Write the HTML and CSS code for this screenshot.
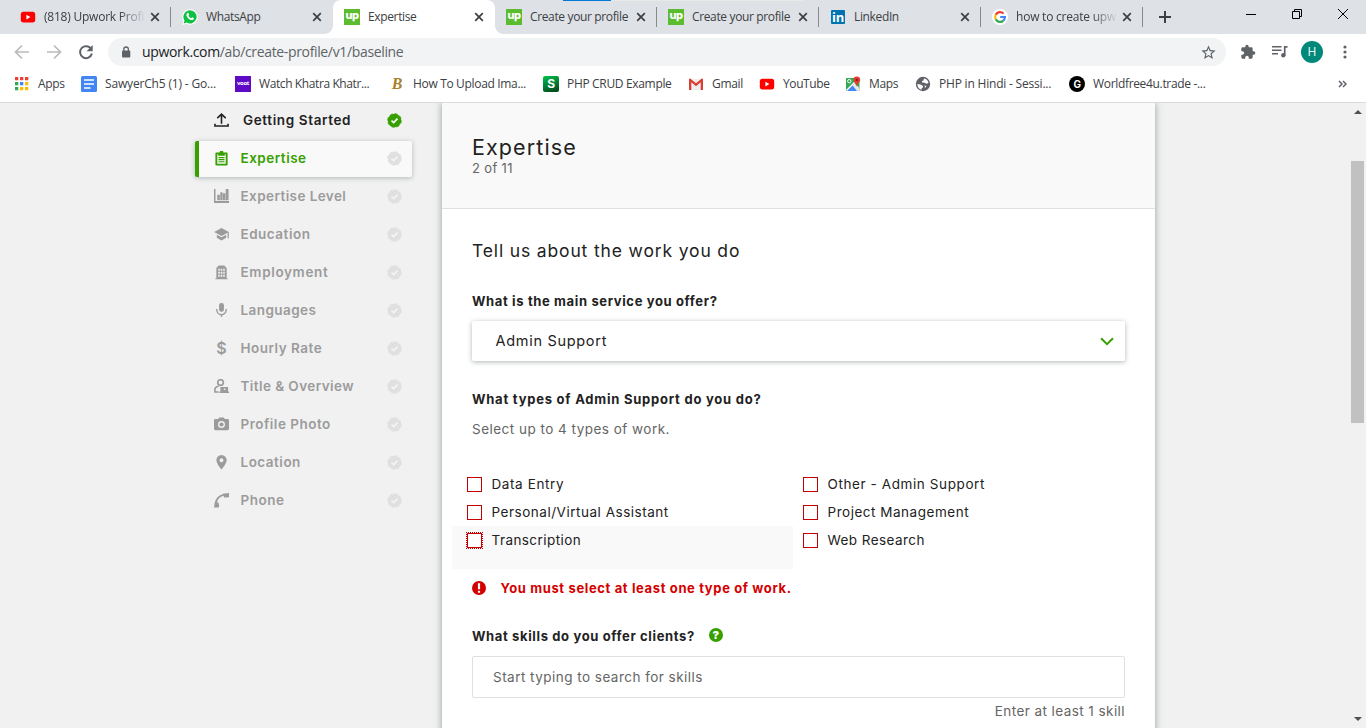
FILE: index.html
```html
<!DOCTYPE html>
<html lang="en">
<head>
<meta charset="utf-8">
<title>Expertise</title>
<link rel="stylesheet" href="styles.css">
</head>
<body>
<svg class="defs" width="0" height="0">
  <defs>
    <symbol id="x" viewBox="0 0 10 10"><path d="M1.2 1.2l7.6 7.6M8.8 1.2L1.2 8.8" stroke="#3c4043" stroke-width="1.7" fill="none"/></symbol>
    <symbol id="yt" viewBox="0 0 16 16"><rect x=".8" y="2.8" width="14.4" height="10.6" rx="2.6" fill="#f00"/><path d="M6.4 5.8v4.6l4-2.3z" fill="#fff"/></symbol>
    <symbol id="seal" viewBox="0 0 14 14"><circle cx="7" cy="7" r="6.3" stroke="none"/><circle cx="7" cy="7" r="6.4" fill="none" stroke="currentColor" stroke-width=".8" stroke-dasharray="3 2.03"/><path d="M4.2 7.2l2 1.800 3.600-3.700" fill="none" stroke-width="1.5"/></symbol>
  </defs>
</svg>

<header class="browser">
  <div class="tabs">
    <div class="top-progress"></div>
    <div class="tab sep"><svg class="fav"><use href="#yt"/></svg><span class="tab-title t-yt fade">(818) Upwork Profi</span><svg class="tab-close"><use href="#x"/></svg></div>
    <div class="tab"><svg class="fav" viewBox="0 0 16 16"><path d="M8 .2a7.7 7.7 0 0 1 0 15.5 8 8 0 0 1-3.6-.9L.2 16l1.200-4.100A7.700 7.700 0 0 1 8 .2z" fill="#fff"/><path d="M8 1.300a6.600 6.600 0 1 1-3.300 12.300l-3 .8.8-2.900A6.600 6.600 0 0 1 8 1.300z" fill="#0fc143"/><path d="M5.300 4.200c.5-.5 1-.4 1.200.1l.6 1.300c.1.400-.5.900-.6 1.200.5 1.100 1.400 1.900 2.500 2.400.4 0 .8-.9 1.200-.9l1.400.7c.5.300.2 1.100-.1 1.500-1 1-2.700.6-3.800-.1C6.200 9.500 5.200 8.400 4.600 7c-.5-1.100-.1-2.200.7-2.800z" fill="#fff"/></svg><span class="tab-title t-wa">WhatsApp</span><svg class="tab-close"><use href="#x"/></svg></div>
    <div class="tab active"><span class="fav up">up</span><span class="tab-title t-ex">Expertise</span><svg class="tab-close"><use href="#x"/></svg></div>
    <div class="tab sep"><span class="fav up">up</span><span class="tab-title t-cr">Create your profile</span><svg class="tab-close"><use href="#x"/></svg></div>
    <div class="tab sep"><span class="fav up">up</span><span class="tab-title t-cr">Create your profile</span><svg class="tab-close"><use href="#x"/></svg></div>
    <div class="tab sep"><span class="fav li">in</span><span class="tab-title t-li">LinkedIn</span><svg class="tab-close"><use href="#x"/></svg></div>
    <div class="tab sep"><svg class="fav" viewBox="0 0 16 16"><circle cx="8" cy="8" r="8" fill="#fff"/><g fill="none" stroke-width="2.200"><path d="M3.700 5.700A4.900 4.900 0 0 1 11.600 4.600" stroke="#ea4335"/><path d="M3.700 10.300a4.900 4.900 0 0 1 0-4.600" stroke="#fbbc05"/><path d="M11.400 11.600a4.900 4.900 0 0 1-7.700-1.300" stroke="#34a853"/><path d="M8.200 8h4.700a4.900 4.900 0 0 1-1.500 3.600" stroke="#4285f4"/></g></svg><span class="tab-title t-go fade">how to create upw</span><svg class="tab-close"><use href="#x"/></svg></div>
    <svg class="new-tab" viewBox="0 0 14 14"><path d="M7 1v12M1 7h12" stroke="#3c4043" stroke-width="2"/></svg>
    <div class="win">
      <svg viewBox="0 0 12 12"><path d="M1 6.500h10" stroke="#000"/></svg>
      <svg viewBox="0 0 12 12"><path d="M1.500 3.500h7v7h-7zM3.500 3.500v-2h7v7h-2" stroke="#000" fill="none"/></svg>
      <svg viewBox="0 0 12 12"><path d="M1 1l10 10M11 1L1 11" stroke="#000" fill="none"/></svg>
    </div>
  </div>

  <div class="toolbar">
    <svg class="nav-btn" viewBox="0 0 16 16"><path d="M15 8H2M8 1.500L1.500 8 8 14.500" fill="none" stroke="#bababc" stroke-width="1.700"/></svg>
    <svg class="nav-btn" viewBox="0 0 16 16"><path d="M1 8h13M8 1.500L14.500 8 8 14.500" fill="none" stroke="#bababc" stroke-width="1.700"/></svg>
    <svg class="nav-btn" viewBox="0 0 16 16"><path d="M13.300 5.200A6 6 0 1 0 13.900 9.600" fill="none" stroke="#5f6368" stroke-width="2"/><path d="M14.700 1v6.200H8.500z" fill="#5f6368"/></svg>
    <div class="omnibox">
      <svg class="lock" viewBox="0 0 10 12"><rect x="1" y="4.500" width="8.300" height="7" rx="1" fill="#5f6368"/><path d="M2.800 5V3.300a2.300 2.300 0 0 1 4.600 0V5" fill="none" stroke="#5f6368" stroke-width="1.300"/></svg>
      <span class="url"><b>upwork.com</b>/ab/create-profile/v1/baseline</span>
      <svg class="star" viewBox="0 0 24 24"><path d="M22 9.240l-7.190-.62L12 2 9.190 8.630 2 9.240l5.460 4.730L5.820 21 12 17.270 18.180 21l-1.630-7.030L22 9.240zM12 15.400l-3.760 2.270 1-4.280-3.320-2.880 4.380-.38L12 6.100l1.710 4.040 4.380.38-3.320 2.880 1 4.280L12 15.400z" fill="#5f6368"/></svg>
    </div>
    <div class="tools">
      <svg class="puzzle" viewBox="0 0 24 24"><path d="M20.500 11H19V7c0-1.100-.9-2-2-2h-4V3.500a2.500 2.500 0 0 0-5 0V5H4c-1.100 0-2 .9-2 2v3.800h1.500a2.700 2.700 0 0 1 0 5.400H2V20c0 1.100.9 2 2 2h3.800v-1.500a2.700 2.700 0 0 1 5.400 0V22H17c1.100 0 2-.9 2-2v-4h1.500a2.500 2.500 0 0 0 0-5z" fill="#5f6368"/></svg>
      <svg class="queue" viewBox="0 0 16 14"><path d="M0 1.800h9.500M0 5.300h9.500M0 8.800h6" stroke="#5f6368" stroke-width="1.500"/><path d="M15.500 1.800h-2.800v8.500" fill="none" stroke="#5f6368" stroke-width="1.700"/><circle cx="11.300" cy="10.300" r="2.200" fill="#5f6368"/></svg>
      <span class="avatar">H</span>
      <svg class="dots" viewBox="0 0 4 14"><g fill="#5f6368"><circle cx="2" cy="2" r="1.600"/><circle cx="2" cy="7" r="1.600"/><circle cx="2" cy="12" r="1.600"/></g></svg>
    </div>
  </div>

  <nav class="bookmarks">
    <a class="bm b1"><svg viewBox="0 0 16 16"><g fill="#ea4335"><path d="M1 1h3.300v3.300H1zM6 1h3.300v3.300H6zM11 1h3.300v3.300H11z"/></g><path d="M1 6h3.300v3.300H1z" fill="#34a853"/><path d="M6 6h3.300v3.300H6z" fill="#4285f4"/><path d="M11 6h3.300v3.300H11z" fill="#fbbc05"/><path d="M1 11h3.300v3.300H1z" fill="#34a853"/><path d="M6 11h3.300v3.300H6zM11 11h3.300v3.300H11z" fill="#fbbc05"/></svg><span>Apps</span></a>
    <a class="bm b2"><svg viewBox="0 0 16 16"><rect width="16" height="16" rx="1.500" fill="#4285f4"/><path d="M3 4h10M3 8h10M3 12h6.500" stroke="#fff" stroke-width="1.700"/></svg><span>SawyerCh5 (1) - Go...</span></a>
    <a class="bm b3"><i class="voot">voot</i><span>Watch Khatra Khatr...</span></a>
    <a class="bm b4"><i class="bee">B</i><span>How To Upload Ima...</span></a>
    <a class="bm b5"><i class="ess">S</i><span>PHP CRUD Example</span></a>
    <a class="bm b6"><svg viewBox="0 0 16 16"><path d="M2 3h12v11H2z" fill="#eee"/><path d="M1 3.500C1 2.500 2 2.200 2.800 2.900L8 7.200l5.200-4.300c.8-.7 1.800-.4 1.800.6V14h-2.300V6.300L8 10.200 3.300 6.300V14H1z" fill="#d93f35"/></svg><span>Gmail</span></a>
    <a class="bm b7"><svg><use href="#yt"/></svg><span>YouTube</span></a>
    <a class="bm b8"><svg viewBox="0 0 16 16"><rect x="1" y="2" width="13.500" height="13" rx="1" fill="#34a853"/><path d="M8 8.500l6.500 6.500H2z" fill="#4285f4"/><path d="M1.500 14.500L12 4" stroke="#fff" stroke-width="1.500"/><path d="M9.500 7l5 5V15H12L7.500 9.500z" fill="#e6e6e6"/><circle cx="4.300" cy="5.200" r="1.700" fill="none" stroke="#fff"/><path d="M11.800.5a3.400 3.400 0 0 1 3.400 3.400c0 2.500-2.700 3-3.400 6.600-.7-3.600-3.400-4.100-3.400-6.600A3.400 3.400 0 0 1 11.800.5z" fill="#e13d30"/><circle cx="11.800" cy="3.900" r="1.200" fill="#8c1f18"/></svg><span>Maps</span></a>
    <a class="bm b9"><svg viewBox="0 0 16 16"><circle cx="8" cy="8" r="7.200" fill="#5f6368"/><path d="M9 2.500c2.500.4 4.300 2.200 4.500 4.500l-2 .8-2-1L7.200 6.500 7 5l1.500-.6zM2.300 8l3.200.5L8 10l-.3 1.700-1 .6-.2 1.500C4 13 2.300 11 2.300 8zM9.500 9.500l2 .5-1.500 2z" fill="#fff"/></svg><span>PHP in Hindi - Sessi...</span></a>
    <a class="bm b10"><i class="gee">G</i><span>Worldfree4u.trade -...</span></a>
    <svg class="more" viewBox="0 0 9 8"><path d="M1 1l3 3-3 3M5 1l3 3-3 3" fill="none" stroke="#5f6368" stroke-width="1.500"/></svg>
  </nav>
</header>

<div class="page">
  <aside class="steps">
    <div class="step done"><svg class="ico" viewBox="0 0 16 16"><path d="M8 11.500V2M3.500 5.500L8 1.200 12.500 5.500M1 11.500v2.300h14v-2.300" fill="none" stroke="currentColor" stroke-width="1.700"/></svg><span class="s1">Getting Started</span><svg class="seal"><use href="#seal"/></svg></div>
    <div class="step current"><svg class="ico" viewBox="0 0 16 16"><path fill-rule="evenodd" d="M2.500 1.500H6a2 2 0 0 1 4 0h3.500q1 0 1 1v12q0 1-1 1h-11q-1 0-1-1v-12q0-1 1-1zM3.500 3.500v10h9v-10H11.500v1.500h-7V3.500z"/><path d="M4.800 7h6.400M4.800 9.200h6.400M4.800 11.400h6.400" stroke="currentColor" stroke-width="1.200"/></svg><span class="s2">Expertise</span><svg class="seal"><use href="#seal"/></svg></div>
    <div class="step"><svg class="ico" viewBox="0 0 16 16"><path d="M0 0H1.600v12.800H16V15H0zM3.500 6H6.200v6H3.500zM6.700 3.500h2.500V12H6.700zM9.600 4.500h2.500V12H9.600zM12.500 0H15.500v12h-3z"/></svg><span class="s3">Expertise Level</span><svg class="seal"><use href="#seal"/></svg></div>
    <div class="step"><svg class="ico" viewBox="0 0 16 16"><path d="M8 1l7.800 4.200V12h-1.300V6.200L8 9.600 .2 5.200zM3 8.200l5 2.800 5-2.800v3.300L8 14.500l-5-3z"/></svg><span class="s4">Education</span><svg class="seal"><use href="#seal"/></svg></div>
    <div class="step"><svg class="ico" viewBox="0 0 16 16"><path fill-rule="evenodd" d="M1.500 14H2.500V3.200L5 .5h6L13.500 3.200V14h1v1.200h-13zM4.500 4v2h1.700V4zm2.600 0v2h1.800V4zm2.700 0v2h1.700V4zM4.500 7.200v2h1.700v-2zm2.600 0v2h1.800v-2zm2.700 0v2h1.700v-2zM4.500 10.400v2h1.700v-2zm2.600 0v2h1.800v-2zm2.700 0v2h1.700v-2z"/></svg><span class="s5">Employment</span><svg class="seal"><use href="#seal"/></svg></div>
    <div class="step"><svg class="ico" viewBox="0 0 16 16"><rect x="5.400" y="0" width="5.200" height="9.300" rx="2.400"/><path d="M3 6.500v1A5 5 0 0 0 13 7.500v-1M8 12.500V15" fill="none" stroke="currentColor" stroke-width="1.500"/></svg><span class="s6">Languages</span><svg class="seal"><use href="#seal"/></svg></div>
    <div class="step"><b class="ico dollar">$</b><span class="s7">Hourly Rate</span><svg class="seal"><use href="#seal"/></svg></div>
    <div class="step"><svg class="ico" viewBox="0 0 16 16"><circle cx="7" cy="3.700" r="3" fill="none" stroke="currentColor" stroke-width="1.800"/><path d="M5 7.700Q1 8.300 1 11.300V13.800H5" fill="none" stroke="currentColor" stroke-width="1.700"/><path fill-rule="evenodd" d="M6.800 8.500h8.200v4.800h1V15H5.800v-1.700h1zm3.700 1.700v1.500H12v-1.500z"/></svg><span class="s8">Title &amp; Overview</span><svg class="seal"><use href="#seal"/></svg></div>
    <div class="step"><svg class="ico" viewBox="0 0 16 16"><path fill-rule="evenodd" d="M5.500 .5h5l1 1.500H14.500q1.500 0 1.500 1.500v9q0 1.500-1.500 1.500H1.500Q0 14 0 12.500v-9Q0 2 1.500 2h3zM8 4.300a3.700 3.700 0 1 0 0 7.400 3.700 3.700 0 0 0 0-7.400z"/><circle cx="8" cy="8" r="2.200"/></svg><span class="s9">Profile Photo</span><svg class="seal"><use href="#seal"/></svg></div>
    <div class="step"><svg class="ico" viewBox="0 0 16 16"><path fill-rule="evenodd" d="M8 0a5.500 5.500 0 0 1 5.500 5.500C13.500 9 8 15.500 8 15.500S2.500 9 2.500 5.500A5.500 5.500 0 0 1 8 0zm0 3.400a2.100 2.100 0 1 0 0 4.200 2.100 2.100 0 0 0 0-4.200z"/></svg><span class="s10">Location</span><svg class="seal"><use href="#seal"/></svg></div>
    <div class="step"><svg class="ico" viewBox="0 0 16 16"><path d="M1.800 11Q3 3.500 11 1.800" fill="none" stroke="currentColor" stroke-width="2"/><path d="M9.500 .7l6.500-.7v4.400l-5.200.3zM.8 10h4l.8 4.300-1 1.200H0z"/></svg><span class="s11">Phone</span><svg class="seal"><use href="#seal"/></svg></div>
  </aside>

  <main class="card">
    <div class="card-head">
      <h1>Expertise</h1>
      <p>2 of 11</p>
    </div>
    <div class="card-body">
      <h2>Tell us about the work you do</h2>
      <p class="label l1">What is the main service you offer?</p>
      <div class="select"><span>Admin Support</span><svg viewBox="0 0 14 9"><path d="M1 1.200l6 6 6-6" fill="none" stroke="#37a000" stroke-width="2"/></svg></div>
      <p class="label l2">What types of Admin Support do you do?</p>
      <p class="hint">Select up to 4 types of work.</p>
      <div class="checks">
        <label class="check"><i></i><span class="c1">Data Entry</span></label>
        <label class="check right"><i></i><span class="c2">Other - Admin Support</span></label>
        <label class="check"><i></i><span class="c3">Personal/Virtual Assistant</span></label>
        <label class="check right"><i></i><span class="c4">Project Management</span></label>
        <label class="check focus"><i></i><span class="c5">Transcription</span></label>
        <label class="check right"><i></i><span class="c6">Web Research</span></label>
      </div>
      <p class="error"><svg viewBox="0 0 14 14"><circle cx="7" cy="7" r="7" fill="#d40000"/><path d="M7 2.200v6M7 9.700v2" stroke="#fff" stroke-width="2.200"/></svg><span>You must select at least one type of work.</span></p>
      <p class="label l3"><span>What skills do you offer clients?</span><b class="help">?</b></p>
      <div class="input"><span>Start typing to search for skills</span></div>
      <p class="note"><span>Enter at least 1 skill</span></p>
    </div>
  </main>

  <div class="scrollbar">
    <svg viewBox="0 0 8 4"><path d="M0 4l4-4 4 4z" fill="#505050"/></svg>
    <div class="thumb"></div>
    <svg viewBox="0 0 8 4"><path d="M0 0l4 4 4-4z" fill="#505050"/></svg>
  </div>
</div>
</body>
</html>
```
FILE: styles.css
```css
* { box-sizing: border-box; }
body { margin: 0; width: 1366px; height: 728px; overflow: hidden; background: #f1f1f1; font-family: Inter, "Liberation Sans", sans-serif; }
p, h1, h2 { margin: 0; }
.defs { position: absolute; }
svg { display: block; flex: none; }

/* Browser chrome */
.browser { height: 103px; background: #fff; border-bottom: 1px solid #d9dadc; font-family: "Open Sans", "Noto Sans", sans-serif; font-size: 12px; color: #3c4043; }
.tabs { position: relative; display: flex; height: 34px; padding-left: 9px; background: #dee1e6; }
.top-progress { position: absolute; left: 563px; top: 0; width: 241px; height: 1px; background: linear-gradient(90deg, #0078d7 48px, #e8e8e8 48px); }
.tab { position: relative; display: flex; align-items: center; width: 162px; height: 34px; padding: 0 11px 0 11px; letter-spacing: -.36px; }
.tab.sep { background: linear-gradient(#86898d, #86898d) right 7px / 1px 20px no-repeat; }
.tab.active { background: #fff; border-radius: 8px 8px 0 0; }
.tab.active::before, .tab.active::after { content: ""; position: absolute; bottom: 0; width: 8px; height: 8px; }
.tab.active::before { left: -8px; background: radial-gradient(circle at 0 0, transparent 7.5px, #fff 8px); }
.tab.active::after { right: -8px; background: radial-gradient(circle at 100% 0, transparent 7.5px, #fff 8px); }
.fav { flex: none; width: 16px; height: 16px; }
.up { background: #5bbc2f; color: #fff; font: 800 11px/13px Inter, sans-serif; letter-spacing: -.5px; text-align: center; }
.li { width: 14px; height: 14px; border-radius: 1px; margin: 0 1px; background: #0073b1; color: #fff; font: 700 13px/14px "Open Sans", sans-serif; text-align: center; }
.tab-title { flex: 1; margin-left: 8px; white-space: nowrap; line-height: 18px; }
.t-yt, .t-go { letter-spacing: -.22px; }
.fade { -webkit-mask-image: linear-gradient(90deg, #000 74%, transparent 100%); mask-image: linear-gradient(90deg, #000 74%, transparent 100%); }
.tab-close { width: 10px; height: 10px; margin-left: 4px; }
.new-tab { width: 14px; height: 14px; margin: 10px 0 0 15px; }
.win { display: flex; gap: 34px; margin: 8px 17px 0 auto; }
.win svg { width: 12px; height: 12px; }

.toolbar { display: flex; align-items: center; height: 36px; padding: 0 19px 0 14px; }
.nav-btn { width: 16px; height: 16px; margin-right: 16px; }
.omnibox { display: flex; align-items: center; width: 1118px; height: 28px; margin-left: -2px; padding: 0 9px 0 13px; border-radius: 14px; background: #f1f3f4; }
.lock { width: 10px; height: 12px; }
.url { margin: -2px 0 0 11px; font-size: 14px; color: #5f6368; letter-spacing: -.35px; }
.url b { font-weight: 400; color: #202124; }
.star { width: 17px; height: 17px; margin-left: auto; }
.tools { display: flex; align-items: center; flex: 1; margin-left: 14px; }
.puzzle { width: 16px; height: 16px; }
.queue { width: 16px; height: 14px; margin-left: 16px; }
.avatar { width: 22px; height: 22px; margin-left: 13px; border-radius: 50%; background: #00897b; color: #fff; font-size: 12px; line-height: 22px; text-align: center; }
.dots { width: 4px; height: 14px; margin-left: auto; }

.bookmarks { display: flex; align-items: center; height: 28px; padding-left: 14px; }
.bm { display: flex; align-items: center; gap: 8px; white-space: nowrap; letter-spacing: -.33px; }
.bm span { margin-top: -1px; }
.bm svg, .bm i { flex: none; width: 16px; height: 16px; }
.bm i { font-style: normal; text-align: center; color: #fff; }
.b1 { width: 67px; } .b2, .b3, .b4 { width: 154px; } .b5 { width: 145px; } .b6 { width: 71px; } .b7 { width: 86px; } .b8 { width: 70px; } .b9 { width: 154px; }
.b2 { letter-spacing: -.17px; } .b3 { letter-spacing: -.4px; } .b7 { letter-spacing: -.4px; } .b9 { letter-spacing: -.2px; }
.voot { background: #5f0ac4; font: 700 6px/15px "Open Sans", sans-serif; }
.bm .bee { color: #a78127; font: italic 700 16px/16px "Liberation Serif", serif; }
.ess { border-radius: 2px; background: linear-gradient(160deg, #00c24f, #033f16); font: 700 12px/16px Inter, sans-serif; }
.gee { border-radius: 50%; background: #000; font: 700 10px/16px Inter, sans-serif; }
.more { width: 9px; height: 8px; margin: 0 19px 0 auto; }

/* Page */
.page { display: flex; height: 625px; overflow: hidden; background: #f1f1f1; }
.steps { width: 218px; margin-left: 195px; }
.step { display: flex; align-items: center; width: 217px; height: 36px; margin-bottom: 2px; padding: 0 10px 0 19px; border-radius: 2px; color: #9b9b9b; fill: currentColor; font-size: 13.5px; font-weight: 600; letter-spacing: .5px; }
.step.done { color: #222; }
.step .s1 { margin-left: 14px; letter-spacing: .62px; }
.step.current { padding-left: 15px; border-left: 4px solid #37a000; background: #f9f9f9; color: #37a000; box-shadow: 0 1px 5px rgba(57, 73, 76, .35); }
.ico { width: 15px; height: 15px; margin-top: -2px; }
.dollar { font-size: 16px; line-height: 15px; text-align: center; font-weight: 600; letter-spacing: 0; }
.step span { margin: -2px 0 0 11.5px; white-space: nowrap; }
.step .s3, .step .s6, .step .s8 { letter-spacing: .42px; }
.step .s5 { letter-spacing: .65px; }
.seal { width: 15px; height: 15px; margin: -1px 0 0 auto; color: #e0e0e0; fill: #e0e0e0; stroke: #f4f4f4; }
.done .seal { color: #37a000; fill: #37a000; stroke: #fff; }

.card { width: 713px; height: 640px; margin-left: 29px; background: #fff; box-shadow: 0 0 7px rgba(57, 73, 76, .5); color: #222; }
.card-head { height: 106px; padding: 29px 30px 0; border-bottom: 1px solid #e0e0e0; background: #f9f9f9; }
h1 { font-size: 21.5px; line-height: 30px; font-weight: 400; letter-spacing: 1.1px; }
.card-head p { margin-top: -2px; font-size: 13px; line-height: 16px; letter-spacing: .35px; color: #656565; }
.card-body { padding: 30px 30px 0; font-size: 13.5px; line-height: 20px; white-space: nowrap; }
h2 { font-size: 17.5px; line-height: 24px; font-weight: 400; letter-spacing: .85px; }
.label { margin-top: 28px; font-size: 13px; font-weight: 700; letter-spacing: .63px; }
.l2 { letter-spacing: .77px; }
.select { display: flex; align-items: center; justify-content: space-between; height: 40px; margin-top: 10px; padding: 0 11px 0 23.5px; border-radius: 2px; background: #fff; box-shadow: 0 1px 5px rgba(57, 73, 76, .4); font-size: 14.5px; letter-spacing: .7px; }
.select svg { width: 14px; height: 9px; }
.hint { margin-top: 10px; color: #656565; letter-spacing: .48px; }
.checks { display: grid; grid-template-columns: 341px 1fr; grid-template-rows: 28px 28px 43px; margin: 31px 0 0 -20px; }
.check { display: flex; align-items: flex-start; padding-left: 15px; line-height: 28px; letter-spacing: .52px; }
.check.right { padding-left: 10px; }
.check i { width: 15px; height: 15px; margin: 7px 9.5px 0 0; border: 1px solid #c40000; background: #fff; }
.c1, .c2 { letter-spacing: .6px; }
.c5, .c6 { letter-spacing: .43px; }
.check.focus { background: #f9f9f9; }
.check.focus i { outline: 1px dotted #c40000; }
.error { display: flex; align-items: center; height: 20px; margin-top: 9px; color: #d40000; font-weight: 700; font-size: 13px; letter-spacing: .63px; }
.error svg { width: 14px; height: 14px; margin-right: 14.5px; }
.error span { margin-top: -1px; }
.l3 { display: flex; align-items: center; }
.help { width: 14px; height: 14px; margin: -2px 0 0 14px; border-radius: 50%; background: #37a000; color: #fff; font-size: 11px; line-height: 14px; letter-spacing: 0; text-align: center; }
.input { height: 42px; margin-top: 10px; padding-left: 20px; border: 1px solid #e0e0e0; border-radius: 2px; line-height: 41px; letter-spacing: .47px; color: #656565; }
.note { margin-top: 3px; text-align: right; letter-spacing: .43px; color: #656565; }

.scrollbar { display: flex; flex-direction: column; align-items: center; width: 17px; margin-left: auto; padding: 7px 0; }
.scrollbar svg { width: 8px; height: 4px; }
.thumb { width: 13px; height: 262px; margin: 47px 0 auto; background: #c1c1c1; }
```
